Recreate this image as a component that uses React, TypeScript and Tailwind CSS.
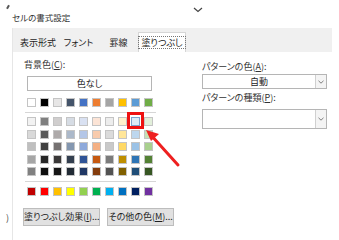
import React from "react";

const theme = ["#FFFFFF", "#000000", "#E7E6E6", "#44546A", "#4472C4", "#ED7D31", "#A5A5A5", "#FFC000", "#5B9BD5", "#70AD47"];
const tints = [
  ["#F2F2F2", "#7F7F7F", "#D0CECE", "#D6DCE4", "#D9E1F2", "#FCE4D6", "#EDEDED", "#FFF2CC", "#DDEBF7", "#E2EFDA"],
  ["#D9D9D9", "#595959", "#AEAAAA", "#ACB9CA", "#B4C6E7", "#F8CBAD", "#DBDBDB", "#FFE699", "#BDD7EE", "#C6E0B4"],
  ["#BFBFBF", "#404040", "#757171", "#8497B0", "#8EA9DB", "#F4B084", "#C9C9C9", "#FFD966", "#9BC2E6", "#A9D08E"],
  ["#A6A6A6", "#262626", "#3A3838", "#333F4F", "#305496", "#C65911", "#7B7B7B", "#BF8F00", "#2F75B5", "#548235"],
  ["#808080", "#0D0D0D", "#161616", "#222B35", "#203764", "#833C0C", "#525252", "#806000", "#1F4E78", "#375623"],
];
const standard = ["#C00000", "#FF0000", "#FFC000", "#FFFF00", "#92D050", "#00B050", "#00B0F0", "#0070C0", "#002060", "#7030A0"];

function Swatch({ c, sel }: { c: string; sel?: boolean }) {
  return (
    <div
      className={sel ? "w-[9px] h-[9px] border border-[#7da2ce]" : "w-[9px] h-[9px] border border-[#c4c4c4]"}
      style={{ backgroundColor: c }}
    />
  );
}

function Row({ colors, selIdx }: { colors: string[]; selIdx?: number }) {
  return (
    <div className="flex gap-x-[4px]">
      {colors.map((c, i) => (
        <Swatch key={i} c={c} sel={i === selIdx} />
      ))}
    </div>
  );
}

function Dropdown({ text, h }: { text: string; h: string }) {
  return (
    <div className={`flex w-[125px] ${h} border border-[#b5b5b5] bg-white`}>
      <div className="flex-1 flex items-center justify-center text-[9px] text-[#222] whitespace-nowrap">{text}</div>
      <div className="w-[11px] border-l border-[#d0d0d0] bg-[#f4f4f4] flex items-center justify-center">
        <svg width="6" height="4" viewBox="0 0 6 4">
          <polyline points="0.5,0.8 3,3.2 5.5,0.8" fill="none" stroke="#707070" strokeWidth="0.9" />
        </svg>
      </div>
    </div>
  );
}

export default function App() {
  return (
    <div
      className="relative w-[339px] h-[240px] bg-white overflow-hidden text-[#1e1e1e] whitespace-nowrap [font-feature-settings:'palt']"
      style={{ fontFamily: '"Noto Sans CJK JP", "Noto Sans", sans-serif' }}
    >
      {/* decorations */}
      <div className="absolute left-[7px] top-[5px] w-[2px] h-[4px] bg-[#555] rotate-[30deg]" />
      <svg className="absolute left-[193px] top-[7px]" width="10" height="6" viewBox="0 0 10 6">
        <polyline points="1,1 5,4.5 9,1" fill="none" stroke="#444" strokeWidth="1.2" />
      </svg>
      <div className="absolute left-[6px] top-[213px] text-[9px] text-[#444] leading-none">)</div>

      {/* title */}
      <div className="h-[28px] pl-[12px] pt-[11px] text-[8.5px] leading-[12px] text-[#333]">セルの書式設定</div>

      {/* body */}
      <div className="flex">
        <div className="w-[12px]" />
        <div className="w-[320px] h-[212px] border-l border-[#e6e6e6]">
          {/* tab strip */}
          <div className="h-[24px] bg-[#f0f0f0] flex items-end text-[9px] leading-[12px]">
            <div className="w-[45px] h-[19px] flex items-center justify-center pl-[5px]">表示形式</div>
            <div className="w-[41px] h-[19px] flex items-center justify-center">フォント</div>
            <div className="w-[39px] h-[19px] flex items-center justify-center">罫線</div>
            <div className="w-[48px] h-[20px] bg-white border border-b-0 border-[#d6d6d6] flex items-center justify-center">
              <div className="border border-dotted border-[#777] px-[2px] leading-[11px]">塗りつぶし</div>
            </div>
          </div>

          {/* content */}
          <div className="flex">
            {/* left column */}
            <div className="w-[155px] pl-[11px] pt-[7px]">
              <div className="text-[9px] leading-[12px] text-[#333]">
                背景色(<span className="underline">C</span>):
              </div>
              <div className="ml-[3px] mt-[5px] w-[125px] h-[15px] border border-[#b5b5b5] flex items-center justify-center text-[9px]">
                色なし
              </div>
              <div className="ml-[3px] mt-[7px]">
                <Row colors={theme} />
              </div>
              <div className="ml-[1px] mt-[5px] w-[131px] h-px bg-[#d6d6d6]" />
              <div className="ml-[3px] mt-[4px] flex flex-col gap-y-[3.5px]">
                {tints.map((r, i) => (
                  <Row key={i} colors={r} selIdx={i === 0 ? 8 : undefined} />
                ))}
              </div>
              <div className="ml-[1px] mt-[5px] w-[131px] h-px bg-[#d6d6d6]" />
              <div className="ml-[3px] mt-[5px]">
                <Row colors={standard} />
              </div>
              <div className="flex gap-[7px] mt-[12px] -ml-[1px] text-[9px]">
                <div className="w-[84px] h-[18px] bg-[#e1e1e1] border border-[#bdbdbd] flex items-center justify-center">
                  塗りつぶし効果(<span className="underline">I</span>)...
                </div>
                <div className="w-[73px] h-[18px] bg-[#e1e1e1] border border-[#bdbdbd] flex items-center justify-center">
                  その他の色(<span className="underline">M</span>)...
                </div>
              </div>
            </div>

            {/* right column */}
            <div className="pl-[34px] pt-[9px] text-[9px]">
              <div className="leading-[12px] text-[#333]">
                パターンの色(<span className="underline">A</span>):
              </div>
              <div className="mt-[1px]">
                <Dropdown text="自動" h="h-[15px]" />
              </div>
              <div className="mt-[3px] leading-[12px] text-[#333]">
                パターンの種類(<span className="underline">P</span>):
              </div>
              <div className="mt-[5px]">
                <Dropdown text="" h="h-[20px]" />
              </div>
            </div>
          </div>
        </div>
      </div>

      {/* red highlight & arrow */}
      <div className="absolute left-[127px] top-[112px] w-[17px] h-[17px] border-[3px] border-[#ee1111]" />
      <svg className="absolute left-[140px] top-[124px]" width="45" height="45" viewBox="0 0 45 45">
        <line x1="10" y1="10" x2="38" y2="41" stroke="#ee2020" strokeWidth="3" strokeLinecap="round" />
        <polygon points="6,6 19,10 11,17" fill="#ee2020" />
      </svg>
    </div>
  );
}
